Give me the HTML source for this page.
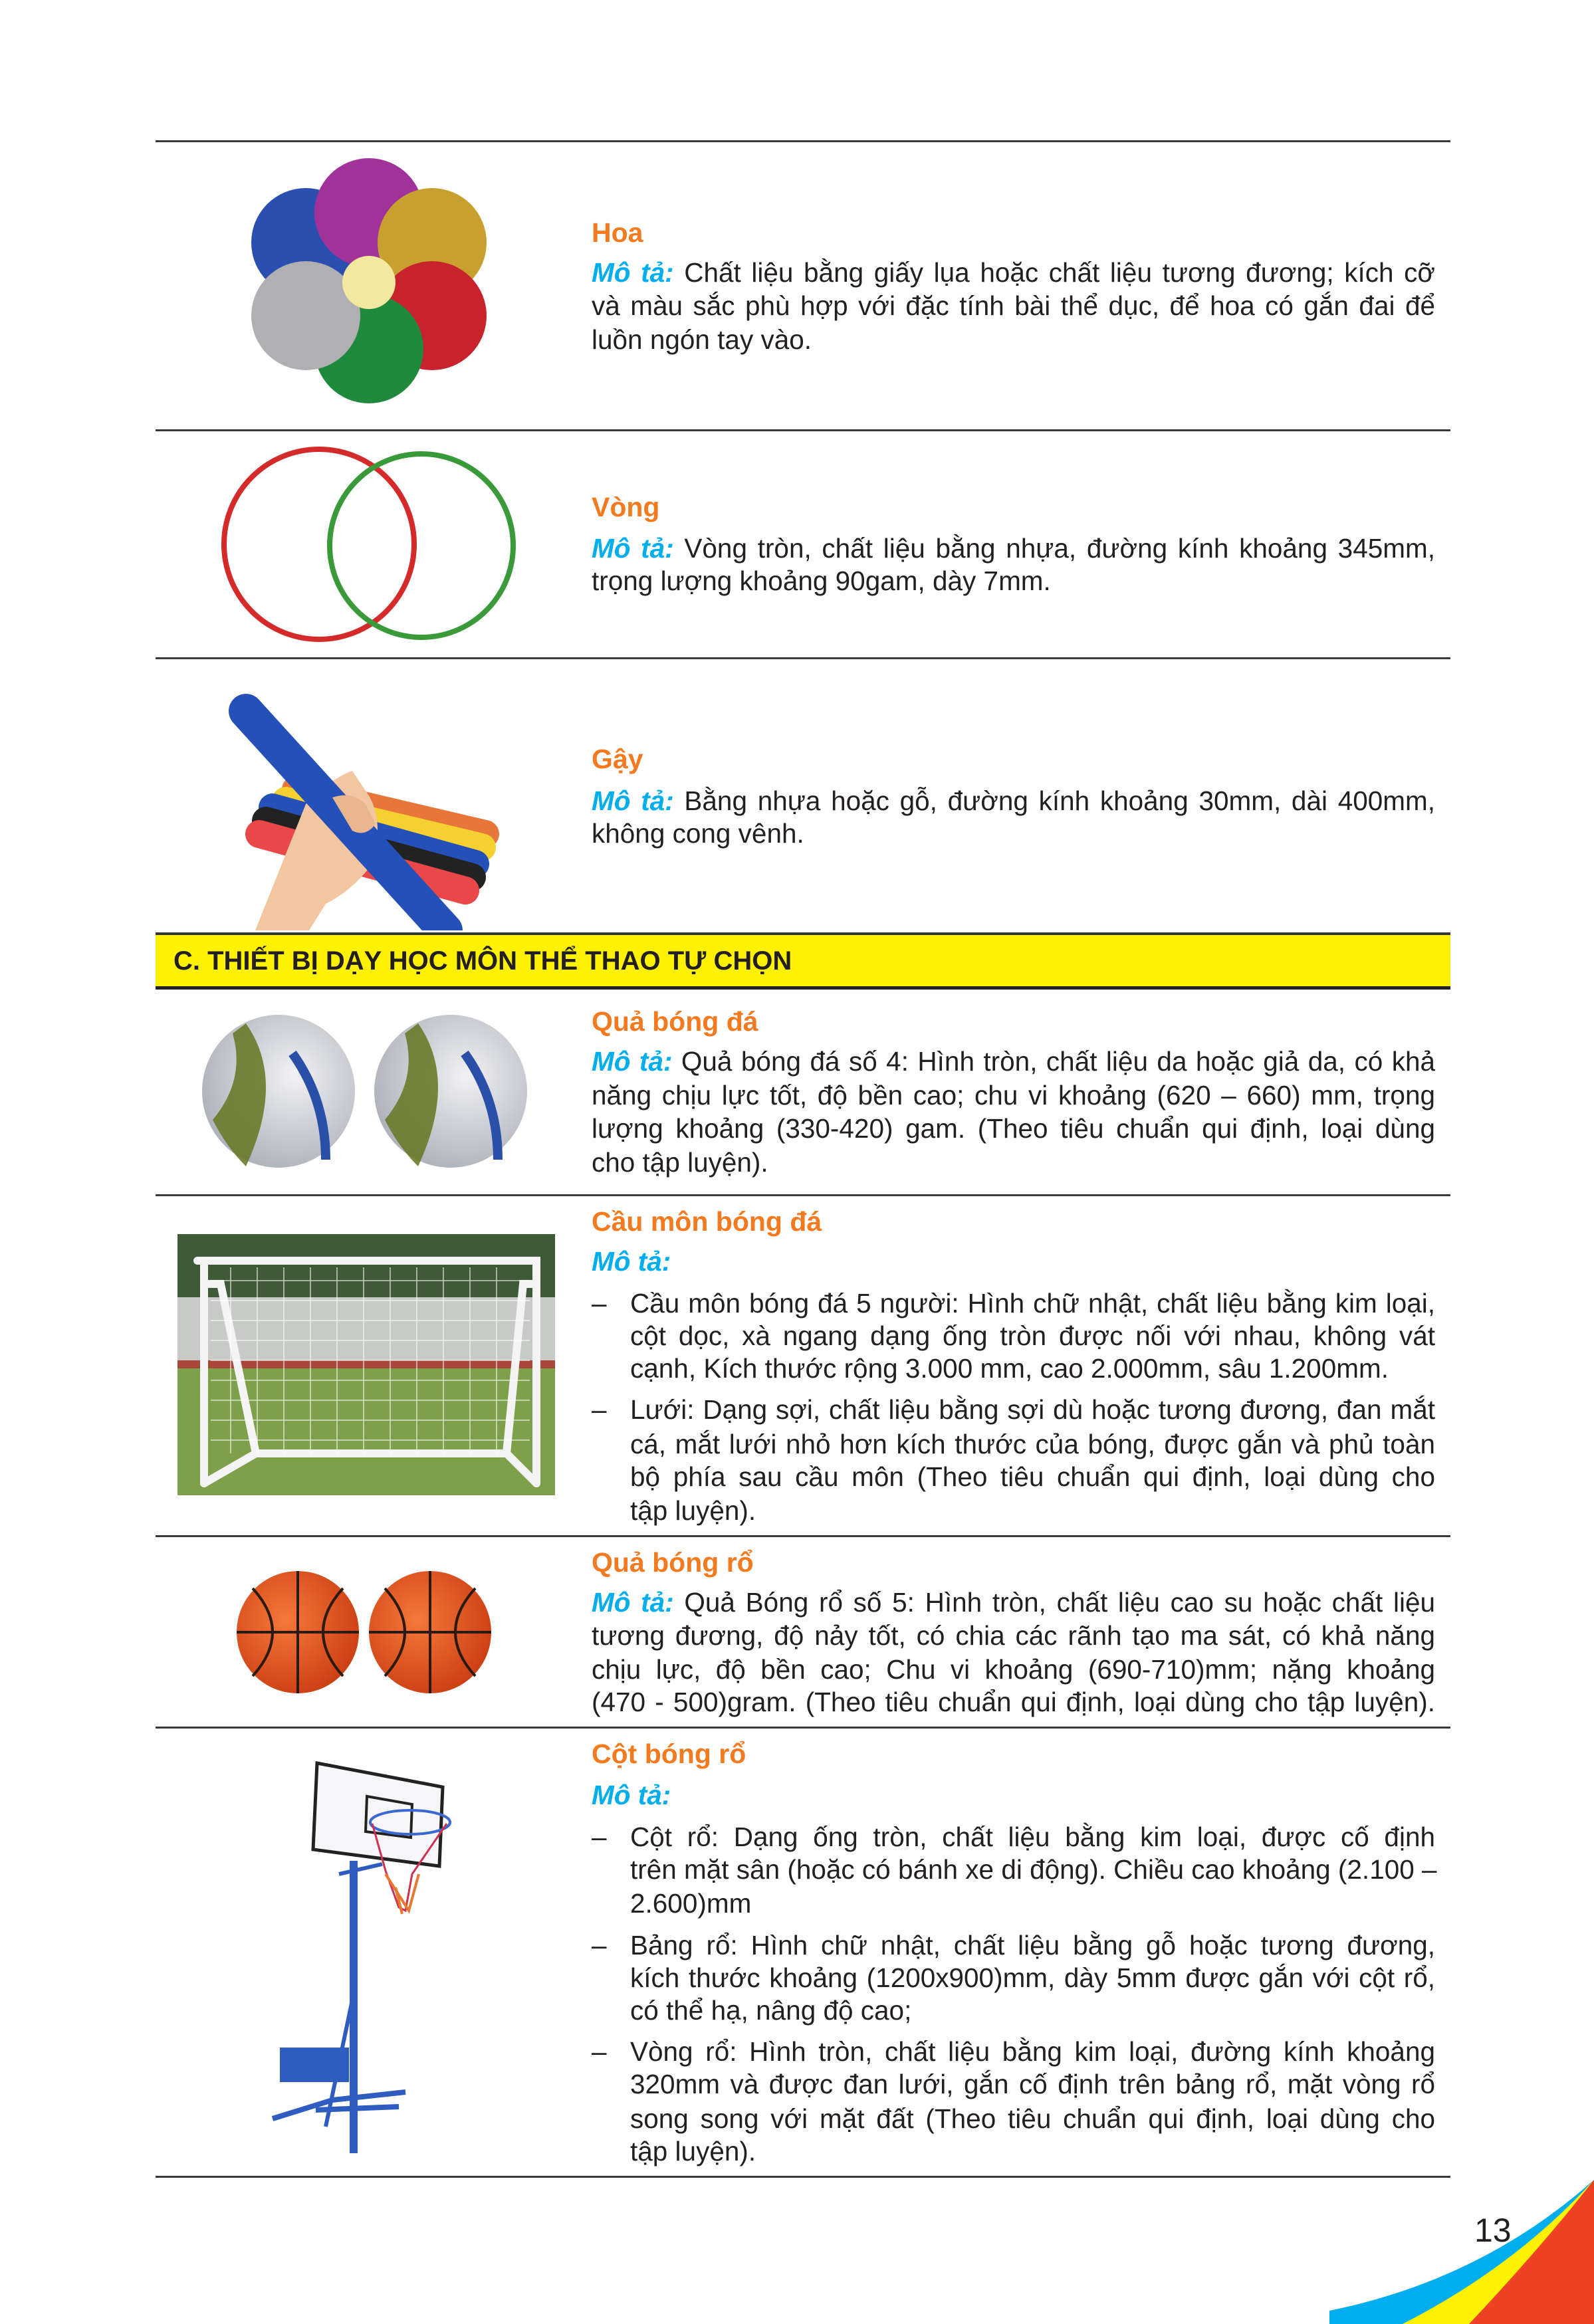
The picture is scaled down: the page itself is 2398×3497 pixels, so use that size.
<!DOCTYPE html>
<html><head><meta charset="utf-8">
<style>
*{margin:0;padding:0;box-sizing:border-box}
body{width:2398px;height:3497px;background:#fff;position:relative;overflow:hidden;font-family:"Liberation Sans",Arial,sans-serif;color:#231f20}
.hr{position:absolute;left:234px;width:1948px;height:3px;background:#3a3a3a}
.ln{position:absolute;left:890px;width:1269px;height:50px;line-height:50px;font-size:40.5px;white-space:nowrap;text-align:justify;text-align-last:justify}
.ln.l{text-align-last:left}
.b{left:948px;width:1211px}
.t{color:#f47a20;font-weight:bold;font-size:41px}
.m{color:#00aeef;font-weight:bold;font-style:italic}
.d{position:absolute;left:890px;height:50px;line-height:50px;font-size:40.5px}
svg{position:absolute}
</style></head><body>

<div class="hr" style="top:211px"></div>
<div class="hr" style="top:646px"></div>
<div class="hr" style="top:989px"></div>
<div class="hr" style="top:1797px"></div>
<div class="hr" style="top:2310px"></div>
<div class="hr" style="top:2598px"></div>
<div class="hr" style="top:3274px"></div>

<div style="position:absolute;left:234px;top:1403px;width:1948px;height:86px;background:#fff200;border-top:4px solid #333;border-bottom:5px solid #222"></div>
<div style="position:absolute;left:261px;top:1421px;height:50px;line-height:50px;font-size:40px;font-weight:bold;color:#231f20">C. THIẾT BỊ DẠY HỌC MÔN THỂ THAO TỰ CHỌN</div>

<div class="ln l t" style="top:325px">Hoa</div>
<div class="ln" style="top:385px"><span class="m">Mô tả:</span> Chất liệu bằng giấy lụa hoặc chất liệu tương đương; kích cỡ</div>
<div class="ln" style="top:435px">và màu sắc phù hợp với đặc tính bài thể dục, để hoa có gắn đai để</div>
<div class="ln l" style="top:486px">luồn ngón tay vào.</div>

<div class="ln l t" style="top:738px">Vòng</div>
<div class="ln" style="top:800px"><span class="m">Mô tả:</span> Vòng tròn, chất liệu bằng nhựa, đường kính khoảng 345mm,</div>
<div class="ln l" style="top:849px">trọng lượng khoảng 90gam, dày 7mm.</div>

<div class="ln l t" style="top:1117px">Gậy</div>
<div class="ln" style="top:1180px"><span class="m">Mô tả:</span> Bằng nhựa hoặc gỗ, đường kính khoảng 30mm, dài 400mm,</div>
<div class="ln l" style="top:1229px">không cong vênh.</div>

<div class="ln l t" style="top:1512px">Quả bóng đá</div>
<div class="ln" style="top:1572px"><span class="m">Mô tả:</span> Quả bóng đá số 4: Hình tròn, chất liệu da hoặc giả da, có khả</div>
<div class="ln" style="top:1623px">năng chịu lực tốt, độ bền cao; chu vi khoảng (620 – 660) mm, trọng</div>
<div class="ln" style="top:1673px">lượng khoảng (330-420) gam. (Theo tiêu chuẩn qui định, loại dùng</div>
<div class="ln l" style="top:1724px">cho tập luyện).</div>

<div class="ln l t" style="top:1813px">Cầu môn bóng đá</div>
<div class="ln l" style="top:1873px"><span class="m">Mô tả:</span></div>
<div class="d" style="top:1936px">–</div>
<div class="ln b" style="top:1936px">Cầu môn bóng đá 5 người: Hình chữ nhật, chất liệu bằng kim loại,</div>
<div class="ln b" style="top:1985px">cột dọc, xà ngang dạng ống tròn được nối với nhau, không vát</div>
<div class="ln b l" style="top:2034px">cạnh, Kích thước rộng 3.000 mm, cao 2.000mm, sâu 1.200mm.</div>
<div class="d" style="top:2096px">–</div>
<div class="ln b" style="top:2096px">Lưới: Dạng sợi, chất liệu bằng sợi dù hoặc tương đương, đan mắt</div>
<div class="ln b" style="top:2148px">cá, mắt lưới nhỏ hơn kích thước của bóng, được gắn và phủ toàn</div>
<div class="ln b" style="top:2197px">bộ phía sau cầu môn (Theo tiêu chuẩn qui định, loại dùng cho</div>
<div class="ln b l" style="top:2248px">tập luyện).</div>

<div class="ln l t" style="top:2326px">Quả bóng rổ</div>
<div class="ln" style="top:2386px"><span class="m">Mô tả:</span> Quả Bóng rổ số 5: Hình tròn, chất liệu cao su hoặc chất liệu</div>
<div class="ln" style="top:2436px">tương đương, độ nảy tốt, có chia các rãnh tạo ma sát, có khả năng</div>
<div class="ln" style="top:2487px">chịu lực, độ bền cao; Chu vi khoảng (690-710)mm; nặng khoảng</div>
<div class="ln" style="top:2536px">(470 - 500)gram. (Theo tiêu chuẩn qui định, loại dùng cho tập luyện).</div>

<div class="ln l t" style="top:2614px">Cột bóng rổ</div>
<div class="ln l" style="top:2676px"><span class="m">Mô tả:</span></div>
<div class="d" style="top:2739px">–</div>
<div class="ln b" style="top:2739px">Cột rổ: Dạng ống tròn, chất liệu bằng kim loại, được cố định</div>
<div class="ln b" style="top:2788px">trên mặt sân (hoặc có bánh xe di động). Chiều cao khoảng (2.100 –</div>
<div class="ln b l" style="top:2839px">2.600)mm</div>
<div class="d" style="top:2902px">–</div>
<div class="ln b" style="top:2902px">Bảng rổ: Hình chữ nhật, chất liệu bằng gỗ hoặc tương đương,</div>
<div class="ln b" style="top:2951px">kích thước khoảng (1200x900)mm, dày 5mm được gắn với cột rổ,</div>
<div class="ln b l" style="top:3000px">có thể hạ, nâng độ cao;</div>
<div class="d" style="top:3062px">–</div>
<div class="ln b" style="top:3062px">Vòng rổ: Hình tròn, chất liệu bằng kim loại, đường kính khoảng</div>
<div class="ln b" style="top:3111px">320mm và được đan lưới, gắn cố định trên bảng rổ, mặt vòng rổ</div>
<div class="ln b" style="top:3163px">song song với mặt đất (Theo tiêu chuẩn qui định, loại dùng cho</div>
<div class="ln b l" style="top:3212px">tập luyện).</div>

<svg style="left:350px;top:225px" width="410" height="410" viewBox="0 0 410 410">
  <circle cx="110" cy="140" r="82" fill="#2a4fb0"/>
  <circle cx="205" cy="95" r="82" fill="#a0329a"/>
  <circle cx="300" cy="140" r="82" fill="#c8a030"/>
  <circle cx="300" cy="250" r="82" fill="#c8222c"/>
  <circle cx="205" cy="300" r="82" fill="#1f8a3c"/>
  <circle cx="110" cy="250" r="82" fill="#b0b0b4"/>
  <circle cx="205" cy="200" r="40" fill="#f2e8a0"/>
</svg>

<svg style="left:320px;top:660px" width="470" height="320" viewBox="0 0 470 320">
 <circle cx="160" cy="159" r="143" fill="none" stroke="#d42a2a" stroke-width="8"/>
 <circle cx="314" cy="161" r="138" fill="none" stroke="#3a9a3a" stroke-width="8"/>
</svg>

<svg style="left:230px;top:1000px" width="600" height="400" viewBox="0 0 600 400">
 <g stroke-linecap="round">
  <line x1="215" y1="188" x2="500" y2="255" stroke="#e8763a" stroke-width="42"/>
  <line x1="200" y1="205" x2="495" y2="275" stroke="#f4d030" stroke-width="42"/>
  <line x1="180" y1="215" x2="485" y2="300" stroke="#2450b8" stroke-width="42"/>
  <line x1="170" y1="235" x2="480" y2="320" stroke="#222" stroke-width="42"/>
  <line x1="160" y1="255" x2="470" y2="340" stroke="#e84848" stroke-width="42"/>
 </g>
 <path d="M140 435 L230 210 Q270 170 300 160 L320 190 Q350 230 330 300 Q300 340 260 360 L210 440 Z" fill="#f3c6a2"/>
 <line x1="140" y1="70" x2="440" y2="400" stroke="#2450b8" stroke-width="52" stroke-linecap="round"/>
 <path d="M270 200 Q300 190 320 210 L335 240 Q320 260 300 250 Z" fill="#eab690"/>
</svg>

<svg style="left:290px;top:1515px" width="520" height="260" viewBox="0 0 520 260">
 <defs><radialGradient id="sb" cx="0.6" cy="0.4" r="0.7"><stop offset="0" stop-color="#f2f2f4"/><stop offset="1" stop-color="#a8acb6"/></radialGradient></defs>
  <circle cx="129" cy="127" r="115" fill="url(#sb)"/>
  <path d="M80 25 Q140 110 80 240 Q50 210 30 170 Q80 110 60 40 Z" fill="#6a7a2a" opacity=".9"/>
  <path d="M150 70 Q200 140 200 230" stroke="#2a4fa8" stroke-width="14" fill="none"/>
  <circle cx="388" cy="127" r="115" fill="url(#sb)"/>
  <path d="M339 25 Q399 110 339 240 Q309 210 289 170 Q339 110 319 40 Z" fill="#6a7a2a" opacity=".9"/>
  <path d="M409 70 Q459 140 459 230" stroke="#2a4fa8" stroke-width="14" fill="none"/>
</svg>

<svg style="left:267px;top:1857px" width="568" height="393" viewBox="0 0 568 393">
 <rect width="568" height="190" fill="#3f5a36"/>
 <rect y="95" width="568" height="95" fill="#c8cac8"/>
 <rect y="190" width="568" height="12" fill="#a8473a"/>
 <rect y="202" width="568" height="191" fill="#7fa04a"/>
 <g stroke="#f4f4f4" stroke-width="12" fill="none" stroke-linecap="round">
  <path d="M40 40 L40 375 M30 40 L540 40 L540 375"/>
  <path d="M40 75 L65 75 L118 330 L495 330 L520 75 L540 75"/>
  <path d="M40 375 L118 330 M540 375 L495 330"/>
 </g>
 <g stroke="#fff" stroke-width="1.5" opacity=".7">
  <path d="M80 50V330M120 50V330M160 50V330M200 50V330M240 50V330M280 50V330M320 50V330M360 50V330M400 50V330M440 50V330M480 50V330"/>
  <path d="M50 70H530M50 100H530M50 130H530M50 160H530M50 190H530M50 220H530M50 250H530M50 280H530M50 310H530"/>
 </g>
</svg>

<svg style="left:350px;top:2360px" width="400" height="200" viewBox="0 0 400 200">
 <defs><radialGradient id="bb" cx="0.4" cy="0.4" r="0.7"><stop offset="0" stop-color="#f6783a"/><stop offset="1" stop-color="#c83a10"/></radialGradient></defs>
 <circle cx="98" cy="96" r="92" fill="url(#bb)"/>
 <path d="M6 96 H190 M98 4 V188 M30 30 Q90 96 30 162 M166 30 Q106 96 166 162" stroke="#2a1a10" stroke-width="4" fill="none"/>
 <circle cx="297" cy="96" r="92" fill="url(#bb)"/>
 <path d="M205 96 H389 M297 4 V188 M229 30 Q289 96 229 162 M365 30 Q305 96 365 162" stroke="#2a1a10" stroke-width="4" fill="none"/>
</svg>

<svg style="left:400px;top:2640px" width="300" height="600" viewBox="0 0 300 600">
 <path d="M77 13 L266 49 L261 168 L71 143 Z" fill="#f6f6f8" stroke="#222" stroke-width="5"/>
 <path d="M152 63 L220 75 L218 125 L150 116 Z" fill="none" stroke="#222" stroke-width="4"/>
 <ellipse cx="217" cy="102" rx="60" ry="18" fill="none" stroke="#3a6ad0" stroke-width="4"/>
 <path d="M160 104 L180 175 L200 230 L210 235 L220 180 L272 104" stroke="#d03050" stroke-width="3" fill="none"/>
 <path d="M180 180 L215 235 L230 180 M195 200 L205 240" stroke="#e87830" stroke-width="4" fill="none"/>
 <rect x="126" y="160" width="12" height="460" fill="#2f5cc0"/>
 <path d="M110 180 L175 165 M132 360 L90 560" stroke="#2f5cc0" stroke-width="6"/>
 <rect x="21" y="441" width="104" height="52" fill="#2f5cc0"/>
 <path d="M10 548 L100 520 L210 508 M75 535 L200 530" stroke="#2f5cc0" stroke-width="8" fill="none"/>
</svg>

<div style="position:absolute;left:2218px;top:3330px;font-size:50px;line-height:52px;color:#231f20">13</div>

<svg style="left:2000px;top:3270px" width="398" height="227" viewBox="0 0 398 227">
 <path d="M0 207 Q230 160 398 10 L398 227 L0 227 Z" fill="#00aeef"/>
 <path d="M110 227 Q280 140 398 10 L398 227 Z" fill="#fff200"/>
 <path d="M210 227 Q320 110 398 10 L398 227 Z" fill="#ef4123"/>
</svg>
</body></html>
